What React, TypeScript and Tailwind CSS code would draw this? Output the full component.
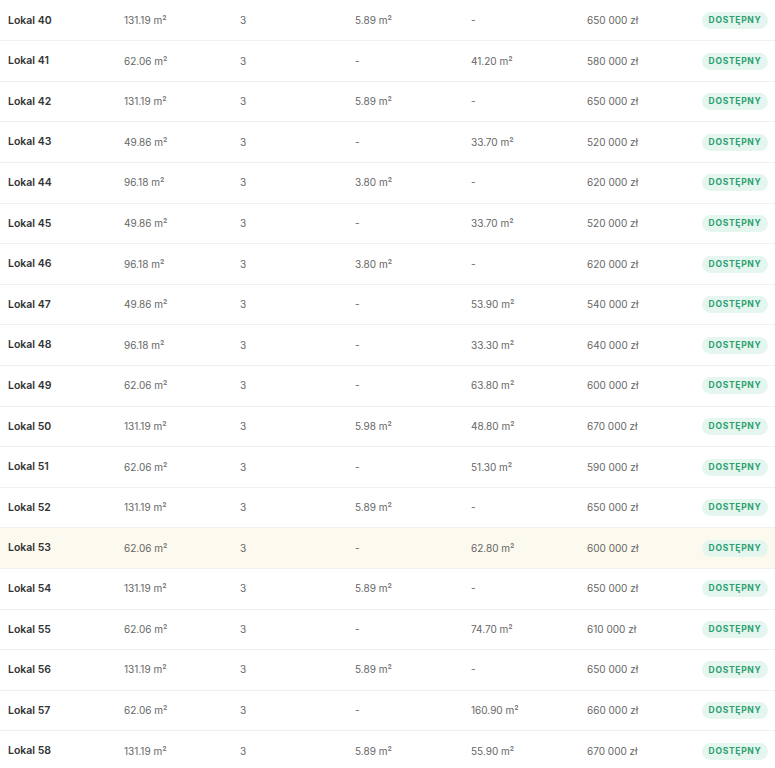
import React from 'react';

type Lokal = {
  nr: number;
  area: string;
  rooms: number;
  balcony: string;
  garden: string;
  price: string;
};

const rows: Lokal[] = [
  { nr: 40, area: '131.19', rooms: 3, balcony: '5.89', garden: '-', price: '650 000' },
  { nr: 41, area: '62.06', rooms: 3, balcony: '-', garden: '41.20', price: '580 000' },
  { nr: 42, area: '131.19', rooms: 3, balcony: '5.89', garden: '-', price: '650 000' },
  { nr: 43, area: '49.86', rooms: 3, balcony: '-', garden: '33.70', price: '520 000' },
  { nr: 44, area: '96.18', rooms: 3, balcony: '3.80', garden: '-', price: '620 000' },
  { nr: 45, area: '49.86', rooms: 3, balcony: '-', garden: '33.70', price: '520 000' },
  { nr: 46, area: '96.18', rooms: 3, balcony: '3.80', garden: '-', price: '620 000' },
  { nr: 47, area: '49.86', rooms: 3, balcony: '-', garden: '53.90', price: '540 000' },
  { nr: 48, area: '96.18', rooms: 3, balcony: '-', garden: '33.30', price: '640 000' },
  { nr: 49, area: '62.06', rooms: 3, balcony: '-', garden: '63.80', price: '600 000' },
  { nr: 50, area: '131.19', rooms: 3, balcony: '5.98', garden: '48.80', price: '670 000' },
  { nr: 51, area: '62.06', rooms: 3, balcony: '-', garden: '51.30', price: '590 000' },
  { nr: 52, area: '131.19', rooms: 3, balcony: '5.89', garden: '-', price: '650 000' },
  { nr: 53, area: '62.06', rooms: 3, balcony: '-', garden: '62.80', price: '600 000' },
  { nr: 54, area: '131.19', rooms: 3, balcony: '5.89', garden: '-', price: '650 000' },
  { nr: 55, area: '62.06', rooms: 3, balcony: '-', garden: '74.70', price: '610 000' },
  { nr: 56, area: '131.19', rooms: 3, balcony: '5.89', garden: '-', price: '650 000' },
  { nr: 57, area: '62.06', rooms: 3, balcony: '-', garden: '160.90', price: '660 000' },
  { nr: 58, area: '131.19', rooms: 3, balcony: '5.89', garden: '55.90', price: '670 000' },
];

const m2 = (v: string) => (v === '-' ? '-' : `${v} m²`);

const App: React.FC = () => {
  return (
    <div className="w-[775px] h-[768px] overflow-hidden bg-white font-['Inter',sans-serif] text-[10px] text-[#666666]">
      <div className="mt-[0.7px]">
        {rows.map((r) => (
          <div
            key={r.nr}
            className={`grid grid-cols-[116px_116px_115px_116px_116px_115px_1fr] items-center h-[40.6px] pl-2 border-b border-[#f0f0f0] ${
              r.nr === 53 ? 'bg-[#fcf9ee]' : ''
            }`}
          >
            <span className="text-[10.5px] font-semibold text-[#333333]">Lokal {r.nr}</span>
            <span>{m2(r.area)}</span>
            <span>{r.rooms}</span>
            <span>{m2(r.balcony)}</span>
            <span>{m2(r.garden)}</span>
            <span>{r.price} zł</span>
            <div>
              <span className="inline-flex items-center justify-center h-[17px] w-[66px] rounded-full bg-[#e4f6ee] text-[#2c9f72] text-[8.5px] font-bold tracking-[0.7px]">
                DOSTĘPNY
              </span>
            </div>
          </div>
        ))}
      </div>
    </div>
  );
};

export default App;
